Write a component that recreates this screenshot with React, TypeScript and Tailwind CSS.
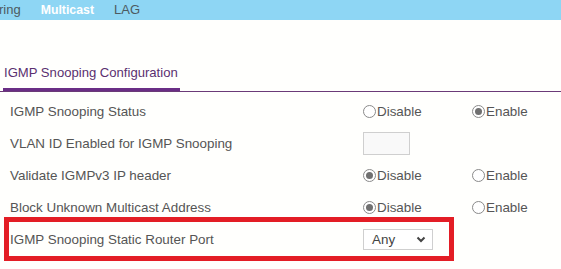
function Radio({ checked, label }: { checked?: boolean; label: string }) {
  return (
    <label className="flex items-center">
      <span className="flex h-[13px] w-[13px] items-center justify-center rounded-full border border-[#8a8a8a] bg-white">
        {checked && <span className="h-[7px] w-[7px] rounded-full bg-[#707070]" />}
      </span>
      <span className="ml-px">{label}</span>
    </label>
  );
}

function Row({ label, children }: { label: string; children?: React.ReactNode }) {
  return (
    <div className="flex h-8 items-center">
      <div className="w-[363px] pl-[10px]">{label}</div>
      {children}
    </div>
  );
}

function Toggle({ value }: { value: "disable" | "enable" }) {
  return (
    <>
      <div className="w-[109px]">
        <Radio label="Disable" checked={value === "disable"} />
      </div>
      <Radio label="Enable" checked={value === "enable"} />
    </>
  );
}

export default function App() {
  return (
    <div className="relative h-[269px] w-[561px] overflow-hidden bg-[#fffffd] text-[13.4px] text-[#555] font-['Liberation_Sans',Arial,sans-serif]">
      <nav className="flex h-5 items-center gap-[20px] bg-[#8ed6f4] text-[13px] text-[#4d5a61]">
        <span className="-ml-px">ring</span>
        <span className="font-bold text-white text-[12.3px]">Multicast</span>
        <span>LAG</span>
      </nav>

      <div className="mt-[43px]">
        <div className="flex items-end border-b border-[#6b3a78]">
          <div className="ml-[3px] w-[177px] whitespace-nowrap border-b-[3px] border-[#6a2e85] pb-[5px] pl-px text-[13.1px] text-[#5a2f70]">
            IGMP Snooping Configuration
          </div>
        </div>
      </div>

      <div className="mt-1">
        <Row label="IGMP Snooping Status">
          <Toggle value="enable" />
        </Row>
        <Row label="VLAN ID Enabled for IGMP Snooping">
          <input
            className="h-[23px] w-[47px] border border-[#cfcfcf] bg-[#f9f9f9] outline-none"
            readOnly
          />
        </Row>
        <Row label="Validate IGMPv3 IP header">
          <Toggle value="disable" />
        </Row>
        <Row label="Block Unknown Multicast Address">
          <Toggle value="disable" />
        </Row>
        <Row label="IGMP Snooping Static Router Port">
          <div className="flex h-[21px] w-[70px] items-center justify-between border border-[#cfcfcf] bg-white pl-[8px] pr-[6px] text-[#444]">
            <span>Any</span>
            <svg width="10" height="7" viewBox="0 0 10 7">
              <path d="M1.5 1.5 L5 5 L8.5 1.5" fill="none" stroke="#444" strokeWidth="2" />
            </svg>
          </div>
        </Row>
      </div>

      <div className="absolute left-[4px] top-[217px] h-[44px] w-[450px] border-[5px] border-[#e31d25]" />
    </div>
  );
}
